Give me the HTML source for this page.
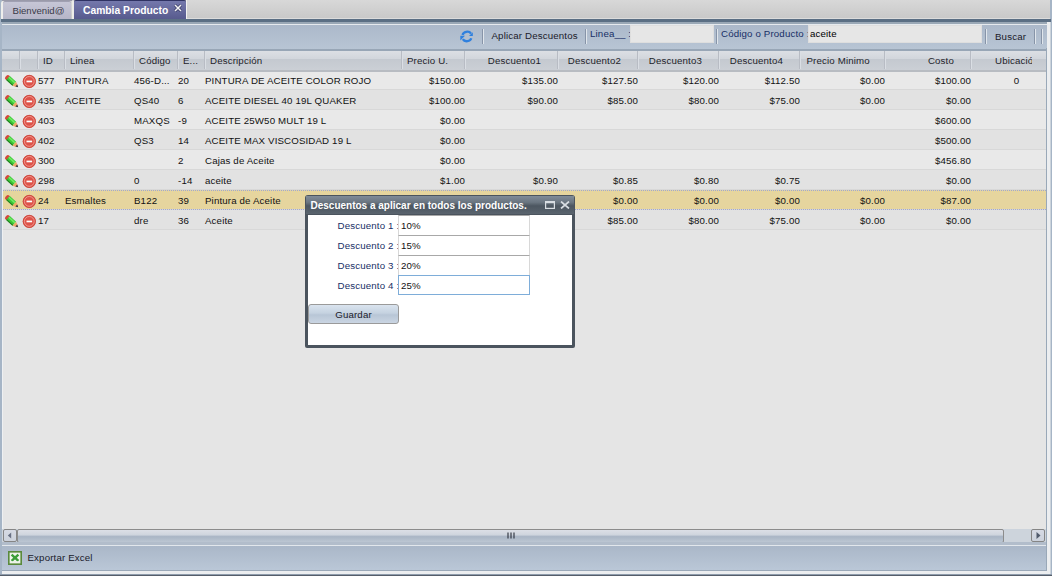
<!DOCTYPE html><html><head><meta charset="utf-8"><style>
*{margin:0;padding:0;box-sizing:border-box}
html,body{width:1052px;height:576px;overflow:hidden;background:#a6b5c6;font-family:"Liberation Sans",sans-serif;font-size:9.7px;letter-spacing:0.15px;color:#111}
.a{position:absolute}
.t{position:absolute;white-space:nowrap;line-height:20px;height:20px}
</style></head><body><div class="a" style="left:2px;top:0;width:1048px;height:19px;background:linear-gradient(#d8d8d8,#c8c8c8)"></div><div class="a" style="left:186px;top:18px;width:864px;height:1px;background:#dcdcdc"></div><div class="a" style="left:1px;top:1px;width:3px;height:18px;background:#eeeeec;border-radius:2px 0 0 0"></div><div class="a" style="left:2px;top:0;width:184px;height:1px;background:#9a9aaa"></div><div class="a" style="left:3px;top:1px;width:68px;height:18px;background:linear-gradient(#c6c6d6,#b6b6c8);border-top:1px solid #a0a0b2;border-radius:2px 2px 0 0"></div><div class="a" style="left:72px;top:0;width:2px;height:19px;background:#ecece8;border-radius:1px 1px 0 0"></div><div class="t" style="left:12.5px;top:0.5px;color:#3a3a48;font-size:9.6px;letter-spacing:0">Bienvenid@</div><div class="a" style="left:74px;top:0;width:112px;height:20px;background:linear-gradient(#7478ac,#56598c);border-top:1px solid #2f3262;border-radius:2px 2px 0 0"></div><div class="t" style="left:83px;top:0.5px;color:#fff;font-weight:bold;font-size:10.3px;letter-spacing:0">Cambia Producto</div><svg class="a" style="left:174px;top:4px" width="8" height="8" viewBox="0 0 8 8"><path d="M1 1 L7 7 M7 1 L1 7" stroke="#2a2d55" stroke-width="2.6"/><path d="M1 1 L7 7 M7 1 L1 7" stroke="#f4f4f8" stroke-width="1.6"/></svg><div class="a" style="left:186px;top:0;width:1px;height:19px;background:#f2f2f0"></div><div class="a" style="left:1px;top:19px;width:1050px;height:3px;background:#5b6f84"></div><div class="a" style="left:2px;top:22px;width:1048px;height:2px;background:#9aa8b6"></div><div class="a" style="left:2px;top:24px;width:1045px;height:1px;background:#e6eaee"></div><div class="a" style="left:2px;top:25px;width:1045px;height:24px;background:linear-gradient(#acb9ca,#b8c5d4)"></div><div class="a" style="left:2px;top:49px;width:1045px;height:2px;background:#98a6b6"></div><svg class="a" style="left:460px;top:30px" width="14" height="13" viewBox="0 0 14 13"><path d="M2.6 5 C3.2 1.8 8.8 0.2 11 3.6" fill="none" stroke="#2f80de" stroke-width="2.3"/><path d="M12.8 2.2 L12.8 5.9 L9 5.9 Z" fill="#2f80de"/><path d="M11.2 8.2 C10.4 11.4 4.8 12.6 2.8 9.2" fill="none" stroke="#2f80de" stroke-width="2.3"/><path d="M0.3 5.8 L5 5.8 L0.3 10.6 Z" fill="#2f80de"/></svg><div class="a" style="left:482px;top:29px;width:2px;height:15px;background:linear-gradient(90deg,#8794a8 50%,#e0e6ec 50%)"></div><div class="a" style="left:585px;top:29px;width:2px;height:15px;background:linear-gradient(90deg,#8794a8 50%,#e0e6ec 50%)"></div><div class="a" style="left:716px;top:29px;width:2px;height:15px;background:linear-gradient(90deg,#8794a8 50%,#e0e6ec 50%)"></div><div class="a" style="left:985px;top:29px;width:2px;height:15px;background:linear-gradient(90deg,#8794a8 50%,#e0e6ec 50%)"></div><div class="a" style="left:1034px;top:29px;width:2px;height:15px;background:linear-gradient(90deg,#8794a8 50%,#e0e6ec 50%)"></div><div class="a" style="left:1041px;top:29px;width:2px;height:15px;background:linear-gradient(90deg,#8794a8 50%,#e0e6ec 50%)"></div><div class="t" style="left:491.5px;top:26px;color:#1a1a2a">Aplicar Descuentos</div><div class="t" style="left:590px;top:24px;color:#172f66">Linea__ :</div><div class="a" style="left:630px;top:25px;width:84px;height:18px;background:#e6e6e6;border:1px solid #dedede"></div><div class="t" style="left:721px;top:24px;color:#172f66">Código o Producto :</div><div class="a" style="left:808px;top:25px;width:174px;height:18px;background:#e6e6e6;border:1px solid #dedede"></div><div class="t" style="left:810px;top:24px;color:#000">aceite</div><div class="t" style="left:995px;top:27px;color:#1a1a2a">Buscar</div><div class="a" style="left:2px;top:71px;width:1044px;height:458px;background:#e5e5e5"></div><div class="a" style="left:2px;top:70px;width:1044px;height:20px;background:#e9e9e9;border-bottom:1px solid #d8d8d8"></div><svg class="a" style="left:3px;top:73px" width="17" height="17" viewBox="0 0 17 17"><g transform="translate(3.4,3.6) rotate(42)"><rect x="-0.6" y="-2.7" width="4" height="5.4" rx="2" fill="#d44a3c"/><rect x="2.2" y="-2.7" width="8.4" height="5.4" fill="#3cc838"/><rect x="2.2" y="-1.9" width="8.4" height="1.6" fill="#70ec62"/><rect x="2.2" y="1.6" width="8.4" height="1.1" fill="#1f7a1f"/><path d="M10.6 -2.7 L14.2 -1.1 L14.2 1.1 L10.6 2.7Z" fill="#f0a868"/><path d="M13.4 -1.4 L15.8 0 L13.4 1.4Z" fill="#2a3040"/></g></svg><svg class="a" style="left:22px;top:74px" width="15" height="15" viewBox="0 0 15 15"><circle cx="7.3" cy="7.4" r="6.5" fill="#de5248"/><circle cx="7.3" cy="7.4" r="6.1" fill="none" stroke="#c8463a" stroke-width="0.8"/><circle cx="7.3" cy="7.4" r="4.9" fill="none" stroke="#f4a49c" stroke-width="0.8"/><rect x="4.5" y="6.6" width="5.6" height="1.7" fill="#fff"/></svg><div class="t" style="left:38px;top:71.0px">577</div><div class="t" style="left:65px;top:71.0px">PINTURA</div><div class="t" style="left:134px;top:71.0px">456-D...</div><div class="t" style="left:178px;top:71.0px">20</div><div class="t" style="left:205px;top:71.0px">PINTURA DE ACEITE COLOR ROJO</div><div class="t" style="left:401px;top:71.0px;width:64px;text-align:right;padding-right:0px">$150.00</div><div class="t" style="left:464px;top:71.0px;width:94px;text-align:right;padding-right:0px">$135.00</div><div class="t" style="left:557px;top:71.0px;width:81px;text-align:right;padding-right:0px">$127.50</div><div class="t" style="left:637px;top:71.0px;width:82px;text-align:right;padding-right:0px">$120.00</div><div class="t" style="left:718px;top:71.0px;width:82px;text-align:right;padding-right:0px">$112.50</div><div class="t" style="left:799px;top:71.0px;width:86px;text-align:right;padding-right:0px">$0.00</div><div class="t" style="left:884px;top:71.0px;width:87px;text-align:right;padding-right:0px">$100.00</div><div class="t" style="left:970px;top:71.0px;width:93px;text-align:center">0</div><div class="a" style="left:2px;top:90px;width:1044px;height:20px;background:#e2e2e2;border-bottom:1px solid #d8d8d8"></div><svg class="a" style="left:3px;top:93px" width="17" height="17" viewBox="0 0 17 17"><g transform="translate(3.4,3.6) rotate(42)"><rect x="-0.6" y="-2.7" width="4" height="5.4" rx="2" fill="#d44a3c"/><rect x="2.2" y="-2.7" width="8.4" height="5.4" fill="#3cc838"/><rect x="2.2" y="-1.9" width="8.4" height="1.6" fill="#70ec62"/><rect x="2.2" y="1.6" width="8.4" height="1.1" fill="#1f7a1f"/><path d="M10.6 -2.7 L14.2 -1.1 L14.2 1.1 L10.6 2.7Z" fill="#f0a868"/><path d="M13.4 -1.4 L15.8 0 L13.4 1.4Z" fill="#2a3040"/></g></svg><svg class="a" style="left:22px;top:94px" width="15" height="15" viewBox="0 0 15 15"><circle cx="7.3" cy="7.4" r="6.5" fill="#de5248"/><circle cx="7.3" cy="7.4" r="6.1" fill="none" stroke="#c8463a" stroke-width="0.8"/><circle cx="7.3" cy="7.4" r="4.9" fill="none" stroke="#f4a49c" stroke-width="0.8"/><rect x="4.5" y="6.6" width="5.6" height="1.7" fill="#fff"/></svg><div class="t" style="left:38px;top:91.0px">435</div><div class="t" style="left:65px;top:91.0px">ACEITE</div><div class="t" style="left:134px;top:91.0px">QS40</div><div class="t" style="left:178px;top:91.0px">6</div><div class="t" style="left:205px;top:91.0px">ACEITE DIESEL 40 19L QUAKER</div><div class="t" style="left:401px;top:91.0px;width:64px;text-align:right;padding-right:0px">$100.00</div><div class="t" style="left:464px;top:91.0px;width:94px;text-align:right;padding-right:0px">$90.00</div><div class="t" style="left:557px;top:91.0px;width:81px;text-align:right;padding-right:0px">$85.00</div><div class="t" style="left:637px;top:91.0px;width:82px;text-align:right;padding-right:0px">$80.00</div><div class="t" style="left:718px;top:91.0px;width:82px;text-align:right;padding-right:0px">$75.00</div><div class="t" style="left:799px;top:91.0px;width:86px;text-align:right;padding-right:0px">$0.00</div><div class="t" style="left:884px;top:91.0px;width:87px;text-align:right;padding-right:0px">$0.00</div><div class="a" style="left:2px;top:110px;width:1044px;height:20px;background:#e9e9e9;border-bottom:1px solid #d8d8d8"></div><svg class="a" style="left:3px;top:113px" width="17" height="17" viewBox="0 0 17 17"><g transform="translate(3.4,3.6) rotate(42)"><rect x="-0.6" y="-2.7" width="4" height="5.4" rx="2" fill="#d44a3c"/><rect x="2.2" y="-2.7" width="8.4" height="5.4" fill="#3cc838"/><rect x="2.2" y="-1.9" width="8.4" height="1.6" fill="#70ec62"/><rect x="2.2" y="1.6" width="8.4" height="1.1" fill="#1f7a1f"/><path d="M10.6 -2.7 L14.2 -1.1 L14.2 1.1 L10.6 2.7Z" fill="#f0a868"/><path d="M13.4 -1.4 L15.8 0 L13.4 1.4Z" fill="#2a3040"/></g></svg><svg class="a" style="left:22px;top:114px" width="15" height="15" viewBox="0 0 15 15"><circle cx="7.3" cy="7.4" r="6.5" fill="#de5248"/><circle cx="7.3" cy="7.4" r="6.1" fill="none" stroke="#c8463a" stroke-width="0.8"/><circle cx="7.3" cy="7.4" r="4.9" fill="none" stroke="#f4a49c" stroke-width="0.8"/><rect x="4.5" y="6.6" width="5.6" height="1.7" fill="#fff"/></svg><div class="t" style="left:38px;top:111.0px">403</div><div class="t" style="left:134px;top:111.0px">MAXQS</div><div class="t" style="left:178px;top:111.0px">-9</div><div class="t" style="left:205px;top:111.0px">ACEITE 25W50 MULT 19 L</div><div class="t" style="left:401px;top:111.0px;width:64px;text-align:right;padding-right:0px">$0.00</div><div class="t" style="left:884px;top:111.0px;width:87px;text-align:right;padding-right:0px">$600.00</div><div class="a" style="left:2px;top:130px;width:1044px;height:20px;background:#e2e2e2;border-bottom:1px solid #d8d8d8"></div><svg class="a" style="left:3px;top:133px" width="17" height="17" viewBox="0 0 17 17"><g transform="translate(3.4,3.6) rotate(42)"><rect x="-0.6" y="-2.7" width="4" height="5.4" rx="2" fill="#d44a3c"/><rect x="2.2" y="-2.7" width="8.4" height="5.4" fill="#3cc838"/><rect x="2.2" y="-1.9" width="8.4" height="1.6" fill="#70ec62"/><rect x="2.2" y="1.6" width="8.4" height="1.1" fill="#1f7a1f"/><path d="M10.6 -2.7 L14.2 -1.1 L14.2 1.1 L10.6 2.7Z" fill="#f0a868"/><path d="M13.4 -1.4 L15.8 0 L13.4 1.4Z" fill="#2a3040"/></g></svg><svg class="a" style="left:22px;top:134px" width="15" height="15" viewBox="0 0 15 15"><circle cx="7.3" cy="7.4" r="6.5" fill="#de5248"/><circle cx="7.3" cy="7.4" r="6.1" fill="none" stroke="#c8463a" stroke-width="0.8"/><circle cx="7.3" cy="7.4" r="4.9" fill="none" stroke="#f4a49c" stroke-width="0.8"/><rect x="4.5" y="6.6" width="5.6" height="1.7" fill="#fff"/></svg><div class="t" style="left:38px;top:131.0px">402</div><div class="t" style="left:134px;top:131.0px">QS3</div><div class="t" style="left:178px;top:131.0px">14</div><div class="t" style="left:205px;top:131.0px">ACEITE MAX VISCOSIDAD 19 L</div><div class="t" style="left:401px;top:131.0px;width:64px;text-align:right;padding-right:0px">$0.00</div><div class="t" style="left:884px;top:131.0px;width:87px;text-align:right;padding-right:0px">$500.00</div><div class="a" style="left:2px;top:150px;width:1044px;height:20px;background:#e9e9e9;border-bottom:1px solid #d8d8d8"></div><svg class="a" style="left:3px;top:153px" width="17" height="17" viewBox="0 0 17 17"><g transform="translate(3.4,3.6) rotate(42)"><rect x="-0.6" y="-2.7" width="4" height="5.4" rx="2" fill="#d44a3c"/><rect x="2.2" y="-2.7" width="8.4" height="5.4" fill="#3cc838"/><rect x="2.2" y="-1.9" width="8.4" height="1.6" fill="#70ec62"/><rect x="2.2" y="1.6" width="8.4" height="1.1" fill="#1f7a1f"/><path d="M10.6 -2.7 L14.2 -1.1 L14.2 1.1 L10.6 2.7Z" fill="#f0a868"/><path d="M13.4 -1.4 L15.8 0 L13.4 1.4Z" fill="#2a3040"/></g></svg><svg class="a" style="left:22px;top:154px" width="15" height="15" viewBox="0 0 15 15"><circle cx="7.3" cy="7.4" r="6.5" fill="#de5248"/><circle cx="7.3" cy="7.4" r="6.1" fill="none" stroke="#c8463a" stroke-width="0.8"/><circle cx="7.3" cy="7.4" r="4.9" fill="none" stroke="#f4a49c" stroke-width="0.8"/><rect x="4.5" y="6.6" width="5.6" height="1.7" fill="#fff"/></svg><div class="t" style="left:38px;top:151.0px">300</div><div class="t" style="left:178px;top:151.0px">2</div><div class="t" style="left:205px;top:151.0px">Cajas de Aceite</div><div class="t" style="left:401px;top:151.0px;width:64px;text-align:right;padding-right:0px">$0.00</div><div class="t" style="left:884px;top:151.0px;width:87px;text-align:right;padding-right:0px">$456.80</div><div class="a" style="left:2px;top:170px;width:1044px;height:20px;background:#e2e2e2;border-bottom:1px solid #d8d8d8"></div><svg class="a" style="left:3px;top:173px" width="17" height="17" viewBox="0 0 17 17"><g transform="translate(3.4,3.6) rotate(42)"><rect x="-0.6" y="-2.7" width="4" height="5.4" rx="2" fill="#d44a3c"/><rect x="2.2" y="-2.7" width="8.4" height="5.4" fill="#3cc838"/><rect x="2.2" y="-1.9" width="8.4" height="1.6" fill="#70ec62"/><rect x="2.2" y="1.6" width="8.4" height="1.1" fill="#1f7a1f"/><path d="M10.6 -2.7 L14.2 -1.1 L14.2 1.1 L10.6 2.7Z" fill="#f0a868"/><path d="M13.4 -1.4 L15.8 0 L13.4 1.4Z" fill="#2a3040"/></g></svg><svg class="a" style="left:22px;top:174px" width="15" height="15" viewBox="0 0 15 15"><circle cx="7.3" cy="7.4" r="6.5" fill="#de5248"/><circle cx="7.3" cy="7.4" r="6.1" fill="none" stroke="#c8463a" stroke-width="0.8"/><circle cx="7.3" cy="7.4" r="4.9" fill="none" stroke="#f4a49c" stroke-width="0.8"/><rect x="4.5" y="6.6" width="5.6" height="1.7" fill="#fff"/></svg><div class="t" style="left:38px;top:171.0px">298</div><div class="t" style="left:134px;top:171.0px">0</div><div class="t" style="left:178px;top:171.0px">-14</div><div class="t" style="left:205px;top:171.0px">aceite</div><div class="t" style="left:401px;top:171.0px;width:64px;text-align:right;padding-right:0px">$1.00</div><div class="t" style="left:464px;top:171.0px;width:94px;text-align:right;padding-right:0px">$0.90</div><div class="t" style="left:557px;top:171.0px;width:81px;text-align:right;padding-right:0px">$0.85</div><div class="t" style="left:637px;top:171.0px;width:82px;text-align:right;padding-right:0px">$0.80</div><div class="t" style="left:718px;top:171.0px;width:82px;text-align:right;padding-right:0px">$0.75</div><div class="t" style="left:884px;top:171.0px;width:87px;text-align:right;padding-right:0px">$0.00</div><div class="a" style="left:2px;top:190px;width:1044px;height:20px;background:#e6d59e;border-bottom:1px solid #d8d8d8"></div><div class="a" style="left:2px;top:190px;width:1044px;height:20px;border-top:1px dotted #a0a8d0;border-bottom:1px dotted #a0a8d0"></div><svg class="a" style="left:3px;top:193px" width="17" height="17" viewBox="0 0 17 17"><g transform="translate(3.4,3.6) rotate(42)"><rect x="-0.6" y="-2.7" width="4" height="5.4" rx="2" fill="#d44a3c"/><rect x="2.2" y="-2.7" width="8.4" height="5.4" fill="#3cc838"/><rect x="2.2" y="-1.9" width="8.4" height="1.6" fill="#70ec62"/><rect x="2.2" y="1.6" width="8.4" height="1.1" fill="#1f7a1f"/><path d="M10.6 -2.7 L14.2 -1.1 L14.2 1.1 L10.6 2.7Z" fill="#f0a868"/><path d="M13.4 -1.4 L15.8 0 L13.4 1.4Z" fill="#2a3040"/></g></svg><svg class="a" style="left:22px;top:194px" width="15" height="15" viewBox="0 0 15 15"><circle cx="7.3" cy="7.4" r="6.5" fill="#de5248"/><circle cx="7.3" cy="7.4" r="6.1" fill="none" stroke="#c8463a" stroke-width="0.8"/><circle cx="7.3" cy="7.4" r="4.9" fill="none" stroke="#f4a49c" stroke-width="0.8"/><rect x="4.5" y="6.6" width="5.6" height="1.7" fill="#fff"/></svg><div class="t" style="left:38px;top:191.0px">24</div><div class="t" style="left:65px;top:191.0px">Esmaltes</div><div class="t" style="left:134px;top:191.0px">B122</div><div class="t" style="left:178px;top:191.0px">39</div><div class="t" style="left:205px;top:191.0px">Pintura de Aceite</div><div class="t" style="left:557px;top:191.0px;width:81px;text-align:right;padding-right:0px">$0.00</div><div class="t" style="left:637px;top:191.0px;width:82px;text-align:right;padding-right:0px">$0.00</div><div class="t" style="left:718px;top:191.0px;width:82px;text-align:right;padding-right:0px">$0.00</div><div class="t" style="left:799px;top:191.0px;width:86px;text-align:right;padding-right:0px">$0.00</div><div class="t" style="left:884px;top:191.0px;width:87px;text-align:right;padding-right:0px">$87.00</div><div class="a" style="left:2px;top:210px;width:1044px;height:20px;background:#e2e2e2;border-bottom:1px solid #d8d8d8"></div><svg class="a" style="left:3px;top:213px" width="17" height="17" viewBox="0 0 17 17"><g transform="translate(3.4,3.6) rotate(42)"><rect x="-0.6" y="-2.7" width="4" height="5.4" rx="2" fill="#d44a3c"/><rect x="2.2" y="-2.7" width="8.4" height="5.4" fill="#3cc838"/><rect x="2.2" y="-1.9" width="8.4" height="1.6" fill="#70ec62"/><rect x="2.2" y="1.6" width="8.4" height="1.1" fill="#1f7a1f"/><path d="M10.6 -2.7 L14.2 -1.1 L14.2 1.1 L10.6 2.7Z" fill="#f0a868"/><path d="M13.4 -1.4 L15.8 0 L13.4 1.4Z" fill="#2a3040"/></g></svg><svg class="a" style="left:22px;top:214px" width="15" height="15" viewBox="0 0 15 15"><circle cx="7.3" cy="7.4" r="6.5" fill="#de5248"/><circle cx="7.3" cy="7.4" r="6.1" fill="none" stroke="#c8463a" stroke-width="0.8"/><circle cx="7.3" cy="7.4" r="4.9" fill="none" stroke="#f4a49c" stroke-width="0.8"/><rect x="4.5" y="6.6" width="5.6" height="1.7" fill="#fff"/></svg><div class="t" style="left:38px;top:211.0px">17</div><div class="t" style="left:134px;top:211.0px">dre</div><div class="t" style="left:178px;top:211.0px">36</div><div class="t" style="left:205px;top:211.0px">Aceite</div><div class="t" style="left:557px;top:211.0px;width:81px;text-align:right;padding-right:0px">$85.00</div><div class="t" style="left:637px;top:211.0px;width:82px;text-align:right;padding-right:0px">$80.00</div><div class="t" style="left:718px;top:211.0px;width:82px;text-align:right;padding-right:0px">$75.00</div><div class="t" style="left:799px;top:211.0px;width:86px;text-align:right;padding-right:0px">$0.00</div><div class="t" style="left:884px;top:211.0px;width:87px;text-align:right;padding-right:0px">$0.00</div><div class="a" style="left:2px;top:51px;width:1044px;height:19px;background:linear-gradient(#dcdfe4 0,#d2d6dc 40%,#c4c9d0 42%,#cbcfd5 100%)"></div><div class="a" style="left:2px;top:70px;width:1044px;height:2px;background:#b8bcc2"></div><div class="a" style="left:19px;top:51px;width:1px;height:18px;background:#b8bcc4"></div><div class="a" style="left:20px;top:51px;width:1px;height:18px;background:#dadee4"></div><div class="a" style="left:37px;top:51px;width:1px;height:18px;background:#b8bcc4"></div><div class="a" style="left:38px;top:51px;width:1px;height:18px;background:#dadee4"></div><div class="a" style="left:64px;top:51px;width:1px;height:18px;background:#b8bcc4"></div><div class="a" style="left:65px;top:51px;width:1px;height:18px;background:#dadee4"></div><div class="a" style="left:133px;top:51px;width:1px;height:18px;background:#b8bcc4"></div><div class="a" style="left:134px;top:51px;width:1px;height:18px;background:#dadee4"></div><div class="a" style="left:177px;top:51px;width:1px;height:18px;background:#b8bcc4"></div><div class="a" style="left:178px;top:51px;width:1px;height:18px;background:#dadee4"></div><div class="a" style="left:204px;top:51px;width:1px;height:18px;background:#b8bcc4"></div><div class="a" style="left:205px;top:51px;width:1px;height:18px;background:#dadee4"></div><div class="a" style="left:401px;top:51px;width:1px;height:18px;background:#b8bcc4"></div><div class="a" style="left:402px;top:51px;width:1px;height:18px;background:#dadee4"></div><div class="a" style="left:464px;top:51px;width:1px;height:18px;background:#b8bcc4"></div><div class="a" style="left:465px;top:51px;width:1px;height:18px;background:#dadee4"></div><div class="a" style="left:557px;top:51px;width:1px;height:18px;background:#b8bcc4"></div><div class="a" style="left:558px;top:51px;width:1px;height:18px;background:#dadee4"></div><div class="a" style="left:637px;top:51px;width:1px;height:18px;background:#b8bcc4"></div><div class="a" style="left:638px;top:51px;width:1px;height:18px;background:#dadee4"></div><div class="a" style="left:718px;top:51px;width:1px;height:18px;background:#b8bcc4"></div><div class="a" style="left:719px;top:51px;width:1px;height:18px;background:#dadee4"></div><div class="a" style="left:799px;top:51px;width:1px;height:18px;background:#b8bcc4"></div><div class="a" style="left:800px;top:51px;width:1px;height:18px;background:#dadee4"></div><div class="a" style="left:884px;top:51px;width:1px;height:18px;background:#b8bcc4"></div><div class="a" style="left:885px;top:51px;width:1px;height:18px;background:#dadee4"></div><div class="a" style="left:970px;top:51px;width:1px;height:18px;background:#b8bcc4"></div><div class="a" style="left:971px;top:51px;width:1px;height:18px;background:#dadee4"></div><div class="t" style="left:43px;top:50.5px;color:#1e1e2a">ID</div><div class="t" style="left:70px;top:50.5px;color:#1e1e2a">Linea</div><div class="t" style="left:139px;top:50.5px;color:#1e1e2a">Código</div><div class="t" style="left:183px;top:50.5px;color:#1e1e2a">E...</div><div class="t" style="left:210px;top:50.5px;color:#1e1e2a">Descripción</div><div class="t" style="left:407px;top:50.5px;color:#1e1e2a">Precio U.</div><div class="t" style="left:464px;top:50.5px;width:93px;text-align:right;padding-right:16px;color:#1e1e2a">Descuento1</div><div class="t" style="left:557px;top:50.5px;width:80px;text-align:right;padding-right:16px;color:#1e1e2a">Descuento2</div><div class="t" style="left:637px;top:50.5px;width:81px;text-align:right;padding-right:16px;color:#1e1e2a">Descuento3</div><div class="t" style="left:718px;top:50.5px;width:81px;text-align:right;padding-right:16px;color:#1e1e2a">Descuento4</div><div class="t" style="left:806.5px;top:50.5px;color:#1e1e2a">Precio Minimo</div><div class="t" style="left:884px;top:50.5px;width:86px;text-align:right;padding-right:16px;color:#1e1e2a">Costo</div><div class="a" style="left:970px;top:50.5px;width:62px;height:18px;overflow:hidden"><div class="t" style="left:25px;top:0;color:#1e1e2a">Ubicación</div></div><div class="a" style="left:1046px;top:48px;width:1px;height:523px;background:#99a8b8"></div><div class="a" style="left:1047px;top:22px;width:3px;height:552px;background:#eceef0"></div><div class="a" style="left:2px;top:72px;width:1px;height:457px;background:#eef0f2"></div><div class="a" style="left:2px;top:529px;width:1044px;height:14px;background:#cdd4dc"></div><div class="a" style="left:3px;top:529px;width:14px;height:13px;border:1px solid #858585;border-radius:2px;background:linear-gradient(#d6dae4,#ccd2dc)"></div><svg class="a" style="left:7px;top:532px" width="5" height="7"><path d="M4.2 0.5 L0.8 3.5 L4.2 6.5Z" fill="#687084"/></svg><div class="a" style="left:17px;top:528.5px;width:987px;height:14px;border:1px solid #8c8c8c;border-radius:2px;background:linear-gradient(#dcdfe6 0,#cfd5de 40%,#a9b5c5 55%,#bcc6d2 100%)"></div><svg class="a" style="left:507px;top:532px" width="8" height="7"><path d="M1 0.5 V6.5 M4 0.5 V6.5 M7 0.5 V6.5" stroke="#2a2f3a" stroke-width="1.1"/></svg><div class="a" style="left:1031px;top:529px;width:14px;height:13px;border:1px solid #858585;border-radius:2px;background:linear-gradient(#d6dae4,#ccd2dc)"></div><svg class="a" style="left:1036px;top:532px" width="5" height="7"><path d="M0.5 0 L4.5 3.5 L0.5 7Z" fill="#505a6c"/></svg><div class="a" style="left:2px;top:542px;width:1044px;height:3px;background:#b2bdcb"></div><div class="a" style="left:2px;top:545px;width:1044px;height:1px;background:#e2e7ec"></div><div class="a" style="left:2px;top:546px;width:1044px;height:24px;background:linear-gradient(#aab7c8,#bac7d7)"></div><div class="a" style="left:2px;top:570px;width:1045px;height:1px;background:#9aa8b8"></div><div class="a" style="left:2px;top:571px;width:1048px;height:3px;background:#eceef0"></div><div class="a" style="left:0;top:574px;width:1052px;height:1px;background:#8e9cac"></div><div class="a" style="left:0;top:575px;width:1052px;height:1px;background:#565e6a"></div><div class="a" style="left:1050px;top:22px;width:1px;height:552px;background:#ccd4dc"></div><svg class="a" style="left:8px;top:550.5px" width="14" height="14" viewBox="0 0 14 14"><rect x="0.8" y="0.8" width="12.4" height="12.4" fill="#e4ecdc" stroke="#5a8a3c" stroke-width="1.6"/><rect x="2.2" y="2.2" width="9.6" height="9.6" fill="#f2f6ee"/><path d="M3.6 3.6 L10.4 9.8 M10.4 3.6 L3.6 9.8" stroke="#3c9e38" stroke-width="2.4"/><path d="M3 10.8 H11" stroke="#e8f0e4" stroke-width="1"/></svg><div class="t" style="left:27.5px;top:548px;color:#1a1a2a">Exportar Excel</div><div class="a" style="left:305px;top:195px;width:270px;height:153px;background:#4b545e;border-radius:3px 3px 2px 2px"></div><div class="a" style="left:306px;top:196px;width:268px;height:18px;background:linear-gradient(#808b98,#6a7580 35%,#4c5660 55%,#525c66 75%,#5a646e)"></div><div class="t" style="left:310.5px;top:195.5px;color:#fff;font-weight:bold;font-size:10px;letter-spacing:0">Descuentos a aplicar en todos los productos.</div><svg class="a" style="left:545px;top:201px" width="10" height="8"><rect x="0.6" y="0.6" width="8.8" height="6.8" fill="none" stroke="#d8dde2" stroke-width="1.2"/><rect x="0" y="0" width="10" height="2.2" fill="#d8dde2"/></svg><svg class="a" style="left:560px;top:201px" width="10" height="8"><path d="M1 0.5 L9 7.5 M9 0.5 L1 7.5" stroke="#d8dde2" stroke-width="1.7"/></svg><div class="a" style="left:308px;top:215px;width:264px;height:130px;background:#fff"></div><div class="t" style="left:337.5px;top:216.0px;color:#172f66">Descuento 1 :</div><div class="a" style="left:398px;top:215px;width:132px;height:21px;background:#fff;border:1px solid #d8d8d8;border-top-color:#a8a8a8;border-bottom-color:#a8a8a8"></div><div class="t" style="left:401px;top:216.0px">10%</div><div class="t" style="left:337.5px;top:236.0px;color:#172f66">Descuento 2 :</div><div class="a" style="left:398px;top:235px;width:132px;height:21px;background:#fff;border:1px solid #d8d8d8;border-top-color:#a8a8a8;border-bottom-color:#a8a8a8"></div><div class="t" style="left:401px;top:236.0px">15%</div><div class="t" style="left:337.5px;top:256.0px;color:#172f66">Descuento 3 :</div><div class="a" style="left:398px;top:255px;width:132px;height:21px;background:#fff;border:1px solid #d8d8d8;border-top-color:#a8a8a8;border-bottom-color:#a8a8a8"></div><div class="t" style="left:401px;top:256.0px">20%</div><div class="t" style="left:337.5px;top:276.0px;color:#172f66">Descuento 4 :</div><div class="a" style="left:398px;top:275px;width:132px;height:20px;background:#fff;border:1px solid #7eadd9"></div><div class="t" style="left:401px;top:276.0px">25%</div><div class="a" style="left:308px;top:304px;width:91px;height:20px;border:1px solid #9a9a9a;border-radius:3px;background:linear-gradient(#dae4ef,#c5d2e0 45%,#b8c6d6 55%,#cad5e2)"></div><div class="t" style="left:308px;top:304.5px;width:91px;text-align:center;color:#1a1a2a">Guardar</div></body></html>
